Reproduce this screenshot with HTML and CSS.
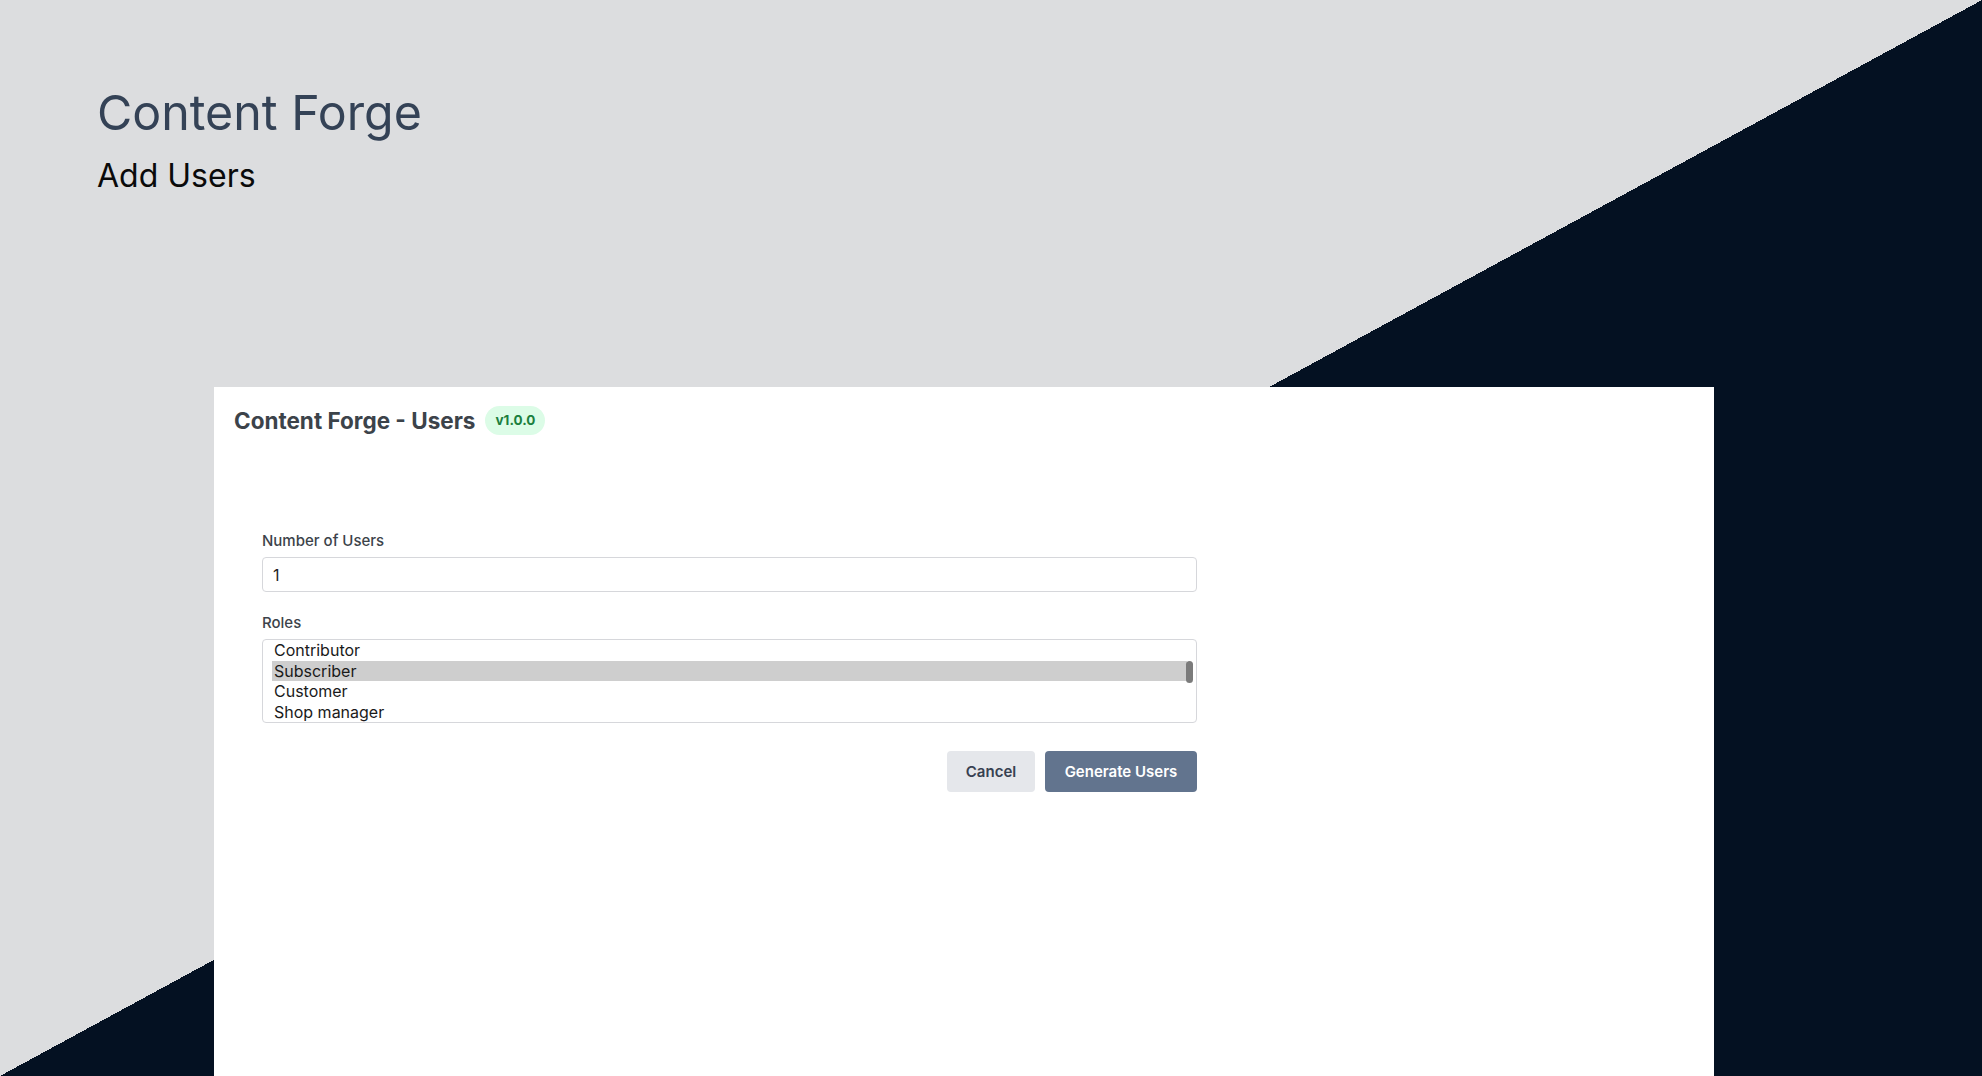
FILE: index.html
```html
<!DOCTYPE html>
<html lang="en">
<head>
<meta charset="utf-8">
<title>Content Forge - Add Users</title>
<link rel="stylesheet" href="styles.css">
</head>
<body>
<div class="page">
  <header class="page-header">
    <h1 class="page-title">Content Forge</h1>
    <h2 class="page-subtitle">Add Users</h2>
  </header>
  <main class="card">
    <div class="card-head">
      <h3 class="card-title">Content Forge - Users</h3>
      <span class="badge">v1.0.0</span>
    </div>
    <form class="form">
      <div class="field">
        <label class="field-label" for="num">Number of Users</label>
        <div class="input" id="num">1</div>
      </div>
      <div class="field">
        <label class="field-label">Roles</label>
        <div class="listbox">
          <div class="option">Contributor</div>
          <div class="option selected">Subscriber</div>
          <div class="option">Customer</div>
          <div class="option">Shop manager</div>
          <span class="thumb"></span>
        </div>
      </div>
      <div class="actions">
        <button type="button" class="btn btn-secondary">Cancel</button>
        <button type="button" class="btn btn-primary">Generate Users</button>
      </div>
    </form>
  </main>
</div>
</body>
</html>
```
FILE: styles.css
```css
* { box-sizing: border-box; }

html, body {
  margin: 0;
  padding: 0;
  height: 100%;
}

body {
  font-family: Inter, "Noto Sans", sans-serif;
  background: linear-gradient(to bottom right, #dcdddf 50%, #041122 50%);
  overflow: hidden;
}

.page {
  height: 100vh;
  display: flex;
  flex-direction: column;
}

.page-header {
  padding: 84px 0 0 97px;
}

.page-title {
  margin: 0;
  font-size: 48.3px;
  line-height: 58px;
  font-weight: 400;
  color: #344256;
}

.page-subtitle {
  margin: 14px 0 0;
  font-size: 32px;
  line-height: 39px;
  font-weight: 400;
  color: #0a0a0a;
}

.card {
  flex: 1;
  margin: 192px 0 0 214px;
  width: 1500px;
  background: #ffffff;
  padding: 18px 20px;
}

.card-head {
  display: flex;
  align-items: center;
  gap: 10px;
  height: 30px;
}

.card-title {
  margin: 0;
  font-size: 22.5px;
  font-weight: 700;
  color: #3c434a;
}

.badge {
  display: inline-flex;
  align-items: center;
  height: 29px;
  padding: 0 10px;
  border-radius: 999px;
  background: #dcfce7;
  color: #1b7f3e;
  font-size: 13.5px;
  font-weight: 700;
}

.form {
  width: 935px;
  margin: 96px 0 0 28px;
}

.field {
  margin-bottom: 21px;
}

.field-label {
  display: block;
  font-size: 15px;
  line-height: 20px;
  font-weight: 500;
  color: #3c434a;
  margin-bottom: 6px;
}

.input {
  height: 35px;
  border: 1px solid #d6d7db;
  border-radius: 4px;
  padding: 0 10px;
  display: flex;
  align-items: center;
  font-size: 16px;
  color: #1e1e1e;
}

.listbox {
  position: relative;
  height: 84px;
  border: 1px solid #d6d7db;
  border-radius: 4px;
  padding: 0 9px;
  overflow: hidden;
}

.option {
  font-size: 16px;
  line-height: 20.5px;
  padding: 0 2px;
  color: #1a1a1a;
  white-space: nowrap;
}

.option.selected {
  background: #cecece;
}

.thumb {
  position: absolute;
  right: 3px;
  top: 21px;
  width: 7px;
  height: 22px;
  border-radius: 4px;
  background: #7b7b7b;
}

.actions {
  display: flex;
  justify-content: flex-end;
  gap: 10px;
  margin-top: 28px;
}

.btn {
  height: 41px;
  border: none;
  border-radius: 4px;
  font-family: inherit;
  font-size: 15px;
  font-weight: 600;
  cursor: pointer;
}

.btn-secondary {
  width: 88px;
  background: #e5e7eb;
  color: #374151;
}

.btn-primary {
  width: 152px;
  background: #62748e;
  color: #ffffff;
}
```
